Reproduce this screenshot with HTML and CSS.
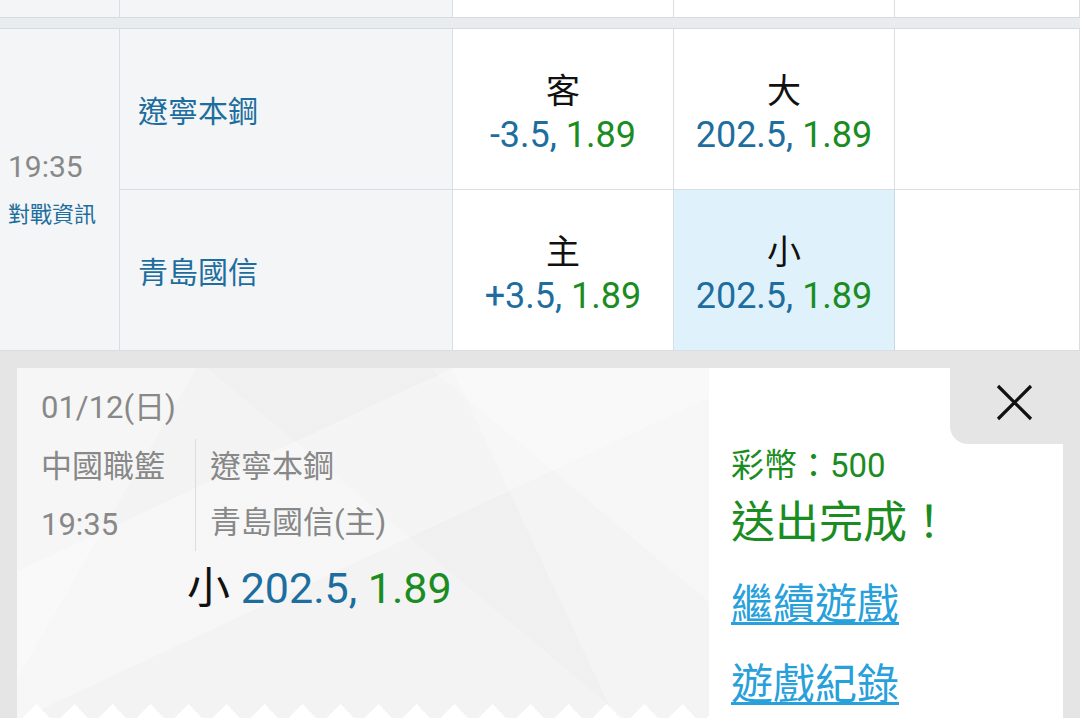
FILE: index.html
```html
<!DOCTYPE html>
<html lang="zh-Hant">
<head>
    <meta charset="UTF-8">
    <meta name="viewport" content="width=device-width, initial-scale=1.0">
    <title>送出完成</title>

    <link rel="stylesheet" href="styles.css">
</head>
<body>
    <main class="board">
        <div class="match prev">
            <div class="cell side"></div>
            <div class="cell side"></div>
            <div class="cell"></div>
            <div class="cell"></div>
            <div class="cell"></div>
        </div>
        <div class="band"></div>
        <div class="match">
            <div class="cell side timeCell">
                <div class="kickoff">19:35</div>
                <a class="info">對戰資訊</a>
            </div>
            <div class="cell side team">遼寧本鋼</div>
            <div class="cell odds">
                <span class="oddsSide">客</span>
                <span class="oddsVal"><span class="line">-3.5,</span> <span class="price">1.89</span></span>
            </div>
            <div class="cell odds">
                <span class="oddsSide">大</span>
                <span class="oddsVal"><span class="line">202.5,</span> <span class="price">1.89</span></span>
            </div>
            <div class="cell"></div>

            <div class="cell side team">青島國信</div>
            <div class="cell odds">
                <span class="oddsSide">主</span>
                <span class="oddsVal"><span class="line">+3.5,</span> <span class="price">1.89</span></span>
            </div>
            <div class="cell odds picked">
                <span class="oddsSide">小</span>
                <span class="oddsVal"><span class="line">202.5,</span> <span class="price">1.89</span></span>
            </div>
            <div class="cell"></div>
        </div>
    </main>

    <div class="overlay">
        <div class="ticket">
            <div class="ticketInfo">
                <div class="ticketDate">01/12(日)</div>
                <div class="ticketMatch">
                    <div class="league">
                        <div>中國職籃</div>
                        <div class="leagueTime">19:35</div>
                    </div>
                    <div class="teams">
                        <div>遼寧本鋼</div>
                        <div>青島國信(主)</div>
                    </div>
                </div>
                <div class="ticketPick">小 <span class="line">202.5,</span> <span class="price">1.89</span></div>
            </div>
            <div class="ticketResult">
                <button class="close" aria-label="關閉">
                    <svg width="37" height="37" viewBox="0 0 37 37">
                        <path d="M2 2 L35 35 M35 2 L2 35" stroke="#111" stroke-width="3.2" fill="none"/>
                    </svg>
                </button>
                <div class="coins">彩幣：500</div>
                <div class="done">送出完成！</div>
                <a class="resultLink first">繼續遊戲</a>
                <a class="resultLink">遊戲紀錄</a>
            </div>
        </div>
    </div>
</body>
</html>
```

FILE: styles.css
```css
body{
    margin: 0;
    padding: 0;
    font-family: Roboto, "Noto Sans CJK TC", sans-serif;
    background-color: #ffffff;
    color: #111;
    overflow: hidden;
}

/* tabela de jogos */
.match{
    display: grid;
    grid-template-columns: 120px 333px 221px 221px 1fr;
    grid-template-rows: 161px 161px;
}
.prev{
    grid-template-rows: 17px;
}
.cell{
    box-sizing: border-box;
    border-right: 1px solid #d9dee3;
    border-bottom: 1px solid #d9dee3;
    background-color: #ffffff;
}
.prev .cell{
    border-bottom: 0;
}
.side{
    background-color: #f4f5f6;
}
.band{
    height: 10px;
    background-color: #e9ecef;
    border-top: 1px solid #d6dbe0;
    border-bottom: 1px solid #d6dbe0;
}
.timeCell{
    grid-row: span 2;
    display: flex;
    flex-direction: column;
    justify-content: center;
    padding-left: 8px;
}
.kickoff{
    font-size: 30px;
    line-height: 50px;
    color: #888;
}
.info{
    font-size: 22px;
    line-height: 46px;
    color: #1d6e9e;
}
.team{
    display: flex;
    align-items: center;
    padding: 0 0 0 18px;
    font-size: 30px;
    color: #1d6e9e;
}
.odds{
    display: flex;
    flex-direction: column;
    justify-content: center;
    align-items: center;
    padding-top: 8px;
}
.oddsSide{
    font-size: 34px;
    line-height: 44px;
    color: #111;
}
.oddsVal{
    font-size: 36px;
    line-height: 44px;
}
.line{
    color: #1d6e9e;
}
.price{
    color: #1a8c22;
}
.picked{
    background-color: #dff2fc;
    border-right-color: #c5d9e6;
}

/* bilhete */
.overlay{
    background-color: #e5e5e5;
    padding: 17px 17px 0;
}
.ticket{
    display: flex;
    height: 355px;
}
.ticketInfo{
    position: relative;
    width: 692px;
    box-sizing: border-box;
    padding: 20px 0 0 24px;
    background-color: #f3f3f3;
    background-image:
        linear-gradient(155deg, transparent 30%, rgba(255,255,255,.3) 30%, rgba(255,255,255,.3) 52%, transparent 52%),
        linear-gradient(40deg, transparent 55%, rgba(0,0,0,.01) 55%, rgba(0,0,0,.01) 75%, transparent 75%),
        linear-gradient(120deg, rgba(255,255,255,.25) 20%, transparent 20%),
        linear-gradient(65deg, transparent 70%, rgba(255,255,255,.3) 70%);
    color: #888;
    font-size: 31px;
}
.ticketInfo::after{
    content: "";
    position: absolute;
    left: 0;
    right: 0;
    bottom: 0;
    height: 19px;
    background: conic-gradient(from 135deg at 50% 0, #ffffff 90deg, transparent 0) 0 0 / 38px 19px repeat-x;
}
.ticketDate{
    line-height: 40px;
}
.ticketMatch{
    display: flex;
    align-items: flex-start;
    margin-top: 11px;
}
.league{
    width: 154px;
    line-height: 56px;
}
.leagueTime{
    line-height: 60px;
}
.teams{
    border-left: 1px solid #dddddd;
    padding-left: 14px;
    line-height: 56px;
}
.ticketPick{
    margin: 8px 0 0 146px;
    font-size: 43px;
    line-height: 50px;
    color: #111;
}

.ticketResult{
    position: relative;
    flex: 1;
    background-color: #ffffff;
    padding: 78px 0 0 22px;
}
.close{
    position: absolute;
    top: 0;
    right: 0;
    width: 113px;
    height: 76px;
    box-sizing: border-box;
    padding: 16px 30px 0 46px;
    border: 0;
    border-bottom-left-radius: 18px;
    background-color: #e5e5e5;
    display: flex;
    align-items: flex-start;
}
.coins{
    font-size: 33px;
    line-height: 40px;
    color: #1a8c22;
}
.done{
    margin-top: 9px;
    font-size: 44px;
    line-height: 56px;
    color: #1a8c22;
}
.resultLink{
    display: block;
    margin-top: 24px;
    font-size: 42px;
    line-height: 56px;
    color: #28a0da;
    text-decoration: underline;
    text-decoration-thickness: 3px;
    text-underline-offset: 3px;
}
.resultLink.first{
    margin-top: 26px;
}
```
